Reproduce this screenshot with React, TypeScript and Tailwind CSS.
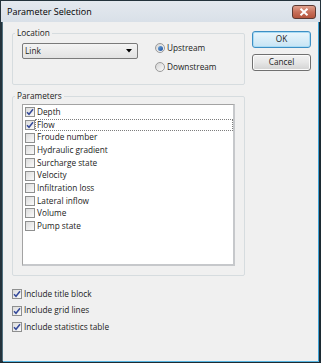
import React from "react";

const font = { fontFamily: '"Open Sans", "Noto Sans", sans-serif' };

function Check({ checked }: { checked: boolean }) {
  return (
    <div className="w-[10px] h-[10px] border border-[#8e8f8f] bg-gradient-to-br from-[#dcdcdc] to-[#fafafa] flex items-center justify-center shrink-0">
      {checked && (
        <svg width="8" height="8" viewBox="0 0 8 8">
          <path d="M1 4.2 L3 6.3 L7 1.2" fill="none" stroke="#34499a" strokeWidth="1.5" />
        </svg>
      )}
    </div>
  );
}

function Radio({ checked }: { checked: boolean }) {
  return (
    <div className="w-[10px] h-[10px] rounded-full border border-[#9a9a9a] bg-gradient-to-br from-[#d4d4d4] to-[#fbfbfb] flex items-center justify-center shrink-0">
      {checked && <div className="w-[5px] h-[5px] rounded-full bg-gradient-to-br from-[#6ea6dc] to-[#1e4f9c]" />}
    </div>
  );
}

const params = [
  ["Depth", true],
  ["Flow", true],
  ["Froude number", false],
  ["Hydraulic gradient", false],
  ["Surcharge state", false],
  ["Velocity", false],
  ["Infiltration loss", false],
  ["Lateral inflow", false],
  ["Volume", false],
  ["Pump state", false],
] as const;

export default function App() {
  return (
    <div className="w-[321px] h-[363px] flex flex-col bg-[#24333c] text-[8.25px] text-[#1b1b1b]" style={font}>
      {/* title bar */}
      <div className="h-[21px] mx-[1px] mt-[1px] bg-gradient-to-b from-[#e4e9ef] to-[#d9e0e8] flex items-center justify-between pl-[6px] pr-[4px]">
        <span className="text-[9px] text-black">Parameter Selection</span>
        <div className="w-[24px] h-[14px] mt-[1px] rounded-[3px] border border-[#5b3a33] bg-gradient-to-b from-[#dfa18e] via-[#c8705a] to-[#b4553d] flex items-center justify-center">
          <svg width="10" height="8" viewBox="0 0 10 8">
            <path d="M1.5 0.8 L8.5 7.2 M8.5 0.8 L1.5 7.2" stroke="#ffffff" strokeWidth="2" />
          </svg>
        </div>
      </div>
      <div className="flex flex-1 min-h-0">
        <div className="w-[2px] bg-[#24333c]" />
        <div className="w-[1px] bg-[#52717f]" />
        <div className="flex-1 bg-[#f0f0f0] flex flex-col pl-[9px]">
          <div className="flex">
            <div className="w-[233px] flex flex-col">
              <fieldset className="mt-[5px] border border-[#d6dcdf] rounded-[2px] h-[58px] p-0">
                <legend className="ml-[2px] px-[2px] leading-[12px]">Location</legend>
                <div className="flex pl-[9px] pt-[4px]">
                  <div className="w-[116px] h-[16px] border border-[#7a7a7a] rounded-[2px] bg-gradient-to-b from-[#f4f4f4] to-[#e2e2e2] flex items-center justify-between pl-[2px] pr-[5px]">
                    <span>Link</span>
                    <svg width="6" height="4" viewBox="0 0 6 4">
                      <path d="M0 0 L6 0 L3 3.5 Z" fill="#000" />
                    </svg>
                  </div>
                  <div className="ml-[17px] flex flex-col gap-[9px] mt-[0px]">
                    <div className="flex items-center gap-[2px] h-[10px]">
                      <Radio checked />
                      <span>Upstream</span>
                    </div>
                    <div className="flex items-center gap-[2px] h-[10px]">
                      <Radio checked={false} />
                      <span>Downstream</span>
                    </div>
                  </div>
                </div>
              </fieldset>
              <fieldset className="mt-[5px] border border-[#d6dcdf] rounded-[2px] h-[186px] p-0">
                <legend className="ml-[2px] px-[2px] leading-[12px]">Parameters</legend>
                <div className="mx-[9px] mt-[2px] h-[162px] bg-white border border-[#a3a3a3] border-r-[2px] border-r-[#c6c8cb] border-b-[2px] border-b-[#c6c8cb] pt-[1px] pl-[1px]">
                  {params.map(([name, c], i) => (
                    <div key={name} className="h-[12.65px] flex items-center">
                      <div className="ml-[1px]">
                        <Check checked={c} />
                      </div>
                      <div
                        className={
                          "flex-1 h-full flex items-center pl-[1px] " +
                          (i === 1 ? "border border-dotted border-[#7d7d7d]" : "border border-transparent")
                        }
                      >
                        {name}
                      </div>
                    </div>
                  ))}
                </div>
              </fieldset>
            </div>
            <div className="ml-[7px] mt-[9px] flex flex-col gap-[6px] w-[59px]">
              <div className="h-[17px] rounded-[3px] border border-[#3d8fc4] bg-gradient-to-b from-[#eaf6fc] to-[#c7e4f4] flex items-center justify-center shadow-[inset_0_0_0_1px_#a9dbf4]">
                OK
              </div>
              <div className="h-[17px] rounded-[3px] border border-[#707070] bg-gradient-to-b from-[#f2f2f2] via-[#e6e6e6] to-[#d2d2d2] flex items-center justify-center shadow-[inset_0_0_0_1px_#fbfbfb]">
                Cancel
              </div>
            </div>
          </div>
          <div className="mt-[13px] flex flex-col gap-[6.5px]">
            {["Include title block", "Include grid lines", "Include statistics table"].map((t) => (
              <div key={t} className="flex items-center gap-[2px] h-[10px]">
                <Check checked />
                <span>{t}</span>
              </div>
            ))}
          </div>
        </div>
        <div className="w-[1px] bg-[#3fa2d6]" />
        <div className="w-[2px] bg-[#1d2b33]" />
      </div>
      <div className="h-[1px] bg-[#57b6e2] ml-[3px] mr-[2px]" />
      <div className="h-[1px] bg-[#1d2b33]" />
    </div>
  );
}
